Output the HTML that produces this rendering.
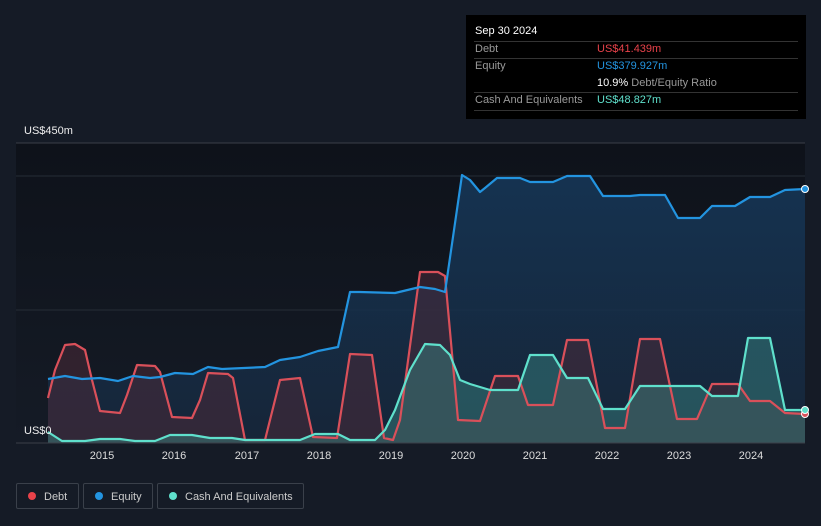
<!DOCTYPE html>
<html><head><style>
body{margin:0;width:821px;height:526px;background:#151b26;font-family:"Liberation Sans",sans-serif;overflow:hidden;position:relative}
.t{position:absolute;background:#000;left:466px;top:15px;width:340px;height:104px;font-size:11px;color:#999}
.t .r{position:absolute;left:8px;right:8px;border-top:1px solid #333}
.leg{position:absolute;top:483px;height:26px;border:1px solid #3a404a;border-radius:2px;color:#ccc;font-size:11px;line-height:26px;box-sizing:border-box}
.leg i{display:inline-block;width:8px;height:8px;border-radius:50%;margin:0 8px 0 11px;vertical-align:-0px}
.yr{position:absolute;top:450px;font-size:11px;color:#ddd;width:40px;text-align:center}
</style></head><body>
<svg width="821" height="526" style="position:absolute;left:0;top:0">
<defs>
<linearGradient id="bg" x1="0" y1="0" x2="0" y2="1"><stop offset="0" stop-color="#0e121a"/><stop offset="1" stop-color="#151b26"/></linearGradient>
<linearGradient id="eq" x1="0" y1="0" x2="0" y2="1"><stop offset="0" stop-color="#16385a" stop-opacity=".85"/><stop offset="1" stop-color="#16283d" stop-opacity=".8"/></linearGradient>
</defs>
<rect x="16" y="143" width="789" height="300" fill="url(#bg)"/>
<line x1="16" y1="143" x2="805" y2="143" stroke="#3a3f48"/>
<line x1="16" y1="176" x2="805" y2="176" stroke="#262c36"/>
<line x1="16" y1="310" x2="805" y2="310" stroke="#262c36"/>
<polygon fill="url(#eq)" points="48,443 48,379 65,376 82,379 100,378 118,381 133,376 150,378 160,377 175,373 193,374 208,367 222,369 265,367 280,360 300,357 318,351 338,347 350,292 360,292 395,293 420,287 435,289 445,292 462,175 470,180 480,192 485,188 497,178 520,178 530,182 553,182 567,176 590,176 603,196 630,196 640,195 665,195 678,218 700,218 712,206 735,206 750,197 770,197 785,190 805,189 805,443"/>
<polygon fill="#4a2a38" fill-opacity=".55" points="48,443 48,398 55,370 65,345 75,344 85,350 92,380 100,411 120,413 127,395 137,365 155,366 160,372 172,417 192,418 200,400 208,373 228,374 233,378 245,440 265,440 280,380 300,378 313,437 337,438 350,354 372,355 384,438 393,440 400,420 420,272 438,272 445,276 458,420 480,421 495,376 518,376 528,405 553,405 567,340 588,340 605,428 625,428 640,339 660,339 677,419 697,419 712,384 738,384 750,401 770,401 785,413 805,414 805,443"/>
<polygon fill="#3a8a85" fill-opacity=".45" points="48,443 48,432 62,441 85,441 100,439 120,439 135,441 155,441 170,435 192,435 210,438 232,438 245,440 300,440 315,434 338,434 350,440 375,440 385,430 395,410 410,370 425,344 440,345 450,355 460,380 470,384 490,390 518,390 530,355 553,355 567,378 588,378 603,409 625,409 640,386 700,386 712,396 738,396 748,338 770,338 785,410 805,410 805,443"/>
<polyline fill="none" stroke="#d9505a" stroke-width="2.2" stroke-linejoin="round" points="48,398 55,370 65,345 75,344 85,350 92,380 100,411 120,413 127,395 137,365 155,366 160,372 172,417 192,418 200,400 208,373 228,374 233,378 245,440 265,440 280,380 300,378 313,437 337,438 350,354 372,355 384,438 393,440 400,420 420,272 438,272 445,276 458,420 480,421 495,376 518,376 528,405 553,405 567,340 588,340 605,428 625,428 640,339 660,339 677,419 697,419 712,384 738,384 750,401 770,401 785,413 805,414"/>
<polyline fill="none" stroke="#2394e0" stroke-width="2.2" stroke-linejoin="round" points="48,379 65,376 82,379 100,378 118,381 133,376 150,378 160,377 175,373 193,374 208,367 222,369 265,367 280,360 300,357 318,351 338,347 350,292 360,292 395,293 420,287 435,289 445,292 462,175 470,180 480,192 485,188 497,178 520,178 530,182 553,182 567,176 590,176 603,196 630,196 640,195 665,195 678,218 700,218 712,206 735,206 750,197 770,197 785,190 805,189"/>
<polyline fill="none" stroke="#5fe0cc" stroke-width="2.2" stroke-linejoin="round" points="48,432 62,441 85,441 100,439 120,439 135,441 155,441 170,435 192,435 210,438 232,438 245,440 300,440 315,434 338,434 350,440 375,440 385,430 395,410 410,370 425,344 440,345 450,355 460,380 470,384 490,390 518,390 530,355 553,355 567,378 588,378 603,409 625,409 640,386 700,386 712,396 738,396 748,338 770,338 785,410 805,410"/>
<line x1="16" y1="443" x2="805" y2="443" stroke="#3a3f48"/>
<circle cx="805" cy="189" r="3.5" fill="#2394e0" stroke="#fff" stroke-width="1"/>
<circle cx="805" cy="414" r="3.5" fill="#d9505a" stroke="#fff" stroke-width="1"/>
<circle cx="805" cy="410" r="3.5" fill="#5fe0cc" stroke="#fff" stroke-width="1"/>
</svg>
<div style="position:absolute;left:24px;top:125px;font-size:11px;color:#eee">US$450m</div>
<div style="position:absolute;left:24px;top:425px;font-size:11px;color:#eee">US$0</div>
<div class="yr" style="left:82px">2015</div><div class="yr" style="left:154px">2016</div><div class="yr" style="left:227px">2017</div><div class="yr" style="left:299px">2018</div><div class="yr" style="left:371px">2019</div><div class="yr" style="left:443px">2020</div><div class="yr" style="left:515px">2021</div><div class="yr" style="left:587px">2022</div><div class="yr" style="left:659px">2023</div><div class="yr" style="left:731px">2024</div>
<div class="t">
<div style="position:absolute;left:9px;top:10px;color:#fff">Sep 30 2024</div>
<div class="r" style="top:26px"></div>
<div style="position:absolute;left:9px;top:28px">Debt</div><div style="position:absolute;left:131px;top:28px;color:#e8424a">US$41.439m</div>
<div class="r" style="top:43px"></div>
<div style="position:absolute;left:9px;top:45px">Equity</div><div style="position:absolute;left:131px;top:45px;color:#2394e0">US$379.927m</div>
<div style="position:absolute;left:131px;top:62px"><b style="color:#fff;font-weight:normal">10.9%</b> Debt/Equity Ratio</div>
<div class="r" style="top:77px"></div>
<div style="position:absolute;left:9px;top:79px">Cash And Equivalents</div><div style="position:absolute;left:131px;top:79px;color:#5fe0cc">US$48.827m</div>
<div class="r" style="top:95px"></div>
</div>
<div class="leg" style="left:16px;width:63px"><i style="background:#e8424a"></i>Debt</div>
<div class="leg" style="left:83px;width:70px"><i style="background:#2394e0"></i>Equity</div>
<div class="leg" style="left:157px;width:147px"><i style="background:#5fe0cc"></i>Cash And Equivalents</div>
</body></html>
